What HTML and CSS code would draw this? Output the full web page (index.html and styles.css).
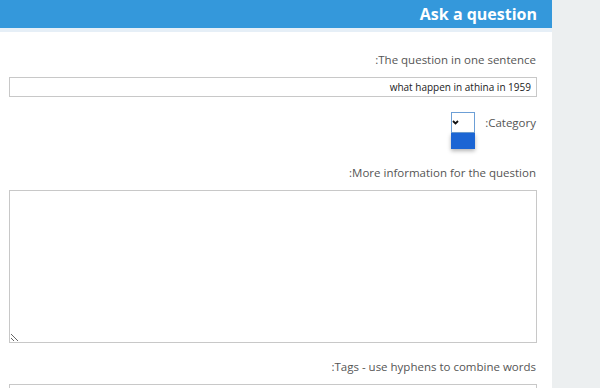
FILE: index.html
```html
<!DOCTYPE html>
<html lang="en">
<head>
  <meta charset="UTF-8" />
  <title>Ask a question</title>
  <link rel="stylesheet" href="styles.css">
</head>
<body>
  <div class="page">
    <div class="main" dir="rtl">
      <h1 class="title">Ask a question</h1>
      <form class="ask-form">
        <label class="field-label">The question in one sentence:</label>
        <input type="text" class="text-input" value="what happen in athina in 1959" />

        <div class="category-row">
          <label class="field-label">Category:</label>
          <div class="select-box">
            <svg width="7" height="5" viewBox="0 0 7 5"><path d="M1 1 L3.5 3.5 L6 1" fill="none" stroke="#111" stroke-width="1.8"/></svg>
            <div class="select-menu"></div>
          </div>
        </div>

        <label class="field-label">More information for the question:</label>
        <textarea class="text-area"></textarea>

        <label class="field-label">Tags - use hyphens to combine words:</label>
        <input type="text" class="text-input" />
      </form>
    </div>
    <div class="side"></div>
  </div>
</body>
</html>
```

FILE: styles.css
```css
html, body {
  margin: 0;
  height: 100%;
  font-family: "Open Sans", Arial, sans-serif;
  background: #fff;
  overflow: hidden;
}

.page {
  display: flex;
  height: 100%;
}

.main {
  width: 552px;
  flex-shrink: 0;
  background: #fff;
}

.side {
  flex: 1;
  background: #eceff0;
}

.title {
  margin: 0;
  height: 28px;
  line-height: 28px;
  padding: 0 15px;
  background: #3498db;
  color: #fff;
  font-size: 16px;
  font-weight: bold;
  border-bottom: 4px solid #e6eff7;
}

.ask-form {
  display: flex;
  flex-direction: column;
  padding: 20px 15px 0 9px;
}

.field-label {
  display: block;
  font-size: 11.5px;
  color: #555;
  line-height: 16px;
  margin-bottom: 9px;
  padding-right: 1px;
}

.text-input {
  box-sizing: border-box;
  width: 528px;
  height: 20px;
  border: 1px solid #c8c8c8;
  padding: 0 5px;
  font-family: inherit;
  font-size: 10px;
  color: #222;
  outline: none;
}

.category-row {
  display: flex;
  align-items: flex-start;
  gap: 10px;
  margin-top: 15px;
  margin-bottom: 32px;
}

.category-row .field-label {
  margin: 3px 0 0;
}

.select-box {
  position: relative;
  box-sizing: border-box;
  width: 24px;
  height: 21px;
  border: 1px solid #6c9fd6;
  background: #fff;
  display: flex;
  align-items: center;
  justify-content: flex-end;
  padding-right: 5px;
}

.select-menu {
  position: absolute;
  top: 20px;
  left: -1px;
  width: 24px;
  height: 16px;
  background: #1b65d4;
  box-shadow: 0 2px 4px rgba(0,0,0,0.3);
}

.text-area {
  box-sizing: border-box;
  width: 528px;
  height: 153px;
  border: 1px solid #c8c8c8;
  margin-bottom: 16px;
  resize: vertical;
  outline: none;
}
```
